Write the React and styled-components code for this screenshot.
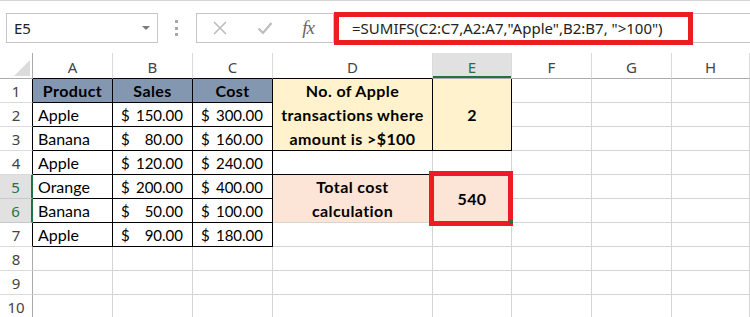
import React from 'react';
import styled, { createGlobalStyle } from 'styled-components';

const GlobalStyle = createGlobalStyle`
  body {
    margin: 0;
    background: #fff;
  }
`;

const GRID = '#d4d4d4';
const BLACK = '#000';
const GREEN = '#217346';
const RED = '#ed1c24';

const Window = styled.div`
  width: 750px;
  height: 317px;
  overflow: hidden;
  background: #fff;
`;

const FormulaBar = styled.div`
  display: flex;
  align-items: flex-start;
  height: 53px;
  box-sizing: border-box;
  padding: 12px 0 10px 6px;
  border-top: 1px solid #d4d4d4;
  font-family: "Noto Sans", "Open Sans", sans-serif;
`;

const NameBox = styled.div`
  width: 152px;
  height: 30px;
  box-sizing: border-box;
  border: 1px solid #c6c6c6;
  display: flex;
  align-items: center;
  justify-content: space-between;
  padding: 0 7px 0 7px;
  font-size: 15px;
  color: #222;
`;

const DropArrow = styled.span`
  width: 0;
  height: 0;
  border-left: 4px solid transparent;
  border-right: 4px solid transparent;
  border-top: 4px solid #7a7a7a;
`;

const Grip = styled.div`
  margin: 7px 0 0 17px;
  width: 4px;
  height: 16px;
  display: flex;
  flex-direction: column;
  justify-content: space-between;
`;

const GripDot = styled.span`
  width: 3px;
  height: 3px;
  background: #a8a8a8;
`;

const ButtonGroup = styled.div`
  margin-left: 17px;
  width: 138px;
  height: 30px;
  box-sizing: border-box;
  border: 1px solid #c6c6c6;
  display: flex;
  align-items: center;
`;

const BarButton = styled.span`
  width: 45px;
  height: 28px;
  display: flex;
  align-items: center;
  justify-content: center;
  color: ${p => p.$color || '#bcbcbc'};
`;

const Fx = styled.span`
  font-family: "Liberation Serif", "DejaVu Serif", serif;
  font-style: italic;
  font-size: 19px;
  color: #666;
  letter-spacing: -1px;
  margin-right: 3px;
`;

const FormulaInput = styled.div`
  position: relative;
  flex: 1;
  height: 30px;
  box-sizing: border-box;
  border-top: 1px solid #c6c6c6;
  border-bottom: 1px solid #c6c6c6;
  display: flex;
  align-items: center;
  padding-left: 18px;
  font-size: 15px;
  color: #222;
  white-space: pre;
`;

const Highlight = styled.div`
  position: absolute;
  box-sizing: border-box;
  border: 5px solid ${RED};
  left: ${p => p.$left}px;
  top: ${p => p.$top}px;
  width: ${p => p.$width}px;
  height: ${p => p.$height}px;
  pointer-events: none;
  z-index: 2;
`;

const Sheet = styled.div`
  display: grid;
  grid-template-columns: 33px 80px 80px 80px 160px 79px 80px 80px 78px;
  grid-template-rows: 26px repeat(10, 24px);
`;

const Corner = styled.div`
  position: relative;
  box-sizing: border-box;
  border-right: 1px solid #ababab;
  border-bottom: 1px solid #ababab;

  &::after {
    content: "";
    position: absolute;
    right: 2px;
    bottom: 2px;
    border-left: 16px solid transparent;
    border-bottom: 16px solid #dcdcdc;
  }
`;

const ColHead = styled.div`
  box-sizing: border-box;
  display: flex;
  align-items: center;
  justify-content: center;
  padding-top: 2px;
  font-family: "Noto Sans", "Open Sans", sans-serif;
  font-size: 15px;
  color: ${p => (p.$active ? GREEN : '#444')};
  background: ${p => (p.$active ? '#e1e1e1' : '#fff')};
  border-right: 1px solid #dadada;
  border-bottom: 1px solid ${p => p.$edge || '#ababab'};
  box-shadow: ${p => (p.$active ? `inset 0 -2px 0 ${GREEN}` : 'none')};
`;

const RowHead = styled.div`
  box-sizing: border-box;
  display: flex;
  align-items: center;
  justify-content: center;
  font-family: "Noto Sans", "Open Sans", sans-serif;
  font-size: 15px;
  color: ${p => (p.$active ? GREEN : '#444')};
  background: ${p => (p.$active ? '#e1e1e1' : '#fff')};
  border-bottom: 1px solid ${p => (p.$active ? '#c8c8c8' : '#dadada')};
  border-right: ${p => (p.$active ? `2px solid ${GREEN}` : `1px solid ${p.$edge || '#ababab'}`)};
`;

const Cell = styled.div`
  position: relative;
  box-sizing: border-box;
  display: flex;
  align-items: center;
  justify-content: ${p => (p.$amount ? 'space-between' : p.$align || 'flex-start')};
  text-align: center;
  padding: 0 ${p => (p.$amount ? '9px 0 8px' : '5px')};
  font-family: Lato, "Open Sans", sans-serif;
  font-size: ${p => (p.$amount ? '15px' : '16px')};
  letter-spacing: ${p => (p.$bold ? '0.4px' : '0')};
  line-height: 24px;
  font-weight: ${p => (p.$bold ? 700 : 400)};
  color: #000;
  background: ${p => p.$fill || '#fff'};
  border-right: 1px solid ${p => p.$right || GRID};
  border-bottom: 1px solid ${p => p.$bottom || GRID};
  grid-row: ${p => (p.$span ? `span ${p.$span}` : 'auto')};
`;

const FillHandle = styled.span`
  position: absolute;
  right: -2px;
  bottom: -2px;
  width: 4px;
  height: 4px;
  background: ${GREEN};
  z-index: 3;
`;

const columns = ['A', 'B', 'C', 'D', 'E', 'F', 'G', 'H'];

const table = [
  ['Apple', '150.00', '300.00'],
  ['Banana', '80.00', '160.00'],
  ['Apple', '120.00', '240.00'],
  ['Orange', '200.00', '400.00'],
  ['Banana', '50.00', '100.00'],
  ['Apple', '90.00', '180.00'],
];

const XIcon = () => (
  <svg width="16" height="16" viewBox="0 0 16 16">
    <path d="M2 2 L14 14 M14 2 L2 14" stroke="currentColor" strokeWidth="1.6" fill="none" />
  </svg>
);

const CheckIcon = () => (
  <svg width="16" height="14" viewBox="0 0 16 14">
    <path d="M1.5 7.5 L6 12 L14.5 2" stroke="currentColor" strokeWidth="2.2" fill="none" />
  </svg>
);

const Amount = ({ value }) => (
  <Cell $amount $right={BLACK} $bottom={BLACK}>
    <span>$</span>
    <span>{value}</span>
  </Cell>
);

const Blank = ({ n }) =>
  Array.from({ length: n }, (_, i) => <Cell key={i} />);

export default function App() {
  const rowEdge = r => (r <= 7 ? BLACK : undefined);

  return (
    <Window>
      <GlobalStyle />
      <FormulaBar>
        <NameBox>
          <span>E5</span>
          <DropArrow />
        </NameBox>
        <Grip>
          <GripDot />
          <GripDot />
          <GripDot />
        </Grip>
        <ButtonGroup>
          <BarButton><XIcon /></BarButton>
          <BarButton><CheckIcon /></BarButton>
          <BarButton><Fx>fx</Fx></BarButton>
        </ButtonGroup>
        <FormulaInput>
          =SUMIFS(C2:C7,A2:A7,"Apple",B2:B7, "&gt;100")
          <Highlight $left={0} $top={-2} $width={359} $height={33} />
        </FormulaInput>
      </FormulaBar>

      <Sheet>
        <Corner />
        {columns.map(c => (
          <ColHead
            key={c}
            $active={c === 'E'}
            $edge={['A', 'B', 'C', 'D'].includes(c) ? BLACK : undefined}
          >
            {c}
          </ColHead>
        ))}

        {/* row 1 */}
        <RowHead $edge={rowEdge(1)}>1</RowHead>
        <Cell $bold $align="center" $fill="#8497b0" $right={BLACK} $bottom={BLACK}>Product</Cell>
        <Cell $bold $align="center" $fill="#8497b0" $right={BLACK} $bottom={BLACK}>Sales</Cell>
        <Cell $bold $align="center" $fill="#8497b0" $right={BLACK} $bottom={BLACK}>Cost</Cell>
        <Cell $bold $align="center" $span={3} $fill="#fff2cc" $right={BLACK} $bottom={BLACK}>
          No. of Apple<br />transactions where<br />amount is &gt;$100
        </Cell>
        <Cell $bold $align="center" $span={3} $fill="#fff2cc" $right={BLACK} $bottom={BLACK}>2</Cell>
        <Blank n={3} />

        {table.map((row, i) => {
          const r = i + 2;
          return (
            <React.Fragment key={r}>
              <RowHead $edge={rowEdge(r)} $active={r === 5 || r === 6}>{r}</RowHead>
              <Cell $right={BLACK} $bottom={BLACK}>{row[0]}</Cell>
              <Amount value={row[1]} />
              <Amount value={row[2]} />
              {r === 4 && (
                <>
                  <Cell $bottom={BLACK} />
                  <Cell />
                </>
              )}
              {r === 5 && (
                <>
                  <Cell $bold $align="center" $span={2} $fill="#fce4d6">
                    Total cost<br />calculation
                  </Cell>
                  <Cell $bold $align="center" $span={2} $fill="#fce4d6">
                    540
                    <Highlight $left={-4} $top={-4} $width={84} $height={55} />
                    <FillHandle />
                  </Cell>
                </>
              )}
              {r === 7 && <Blank n={2} />}
              <Blank n={3} />
            </React.Fragment>
          );
        })}

        {[8, 9, 10].map(r => (
          <React.Fragment key={r}>
            <RowHead>{r}</RowHead>
            <Blank n={8} />
          </React.Fragment>
        ))}
      </Sheet>
    </Window>
  );
}
